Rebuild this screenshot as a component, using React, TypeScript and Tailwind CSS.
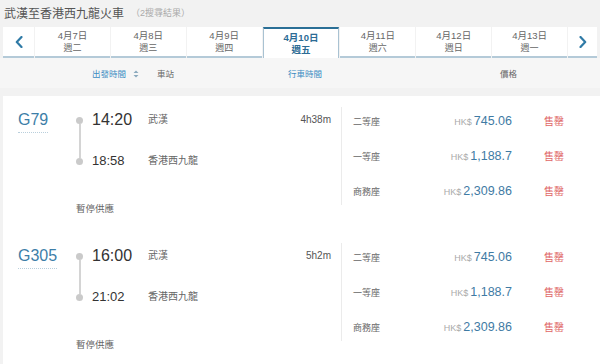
import React from "react";

const font = "font-['Liberation_Sans','Noto_Sans_CJK_TC',sans-serif]";

const dates = [
  { d: "4月7日", w: "週二" },
  { d: "4月8日", w: "週三" },
  { d: "4月9日", w: "週四" },
  { d: "4月10日", w: "週五", active: true },
  { d: "4月11日", w: "週六" },
  { d: "4月12日", w: "週日" },
  { d: "4月13日", w: "週一" },
];

const seats = [
  { name: "二等座", price: "745.06" },
  { name: "一等座", price: "1,188.7" },
  { name: "商務座", price: "2,309.86" },
];

function Chevron({ dir }: { dir: "l" | "r" }) {
  return (
    <svg width="8" height="12" viewBox="0 0 8 12" fill="none">
      <path
        d={dir === "l" ? "M6.5 1 L1.8 6 L6.5 11" : "M1.5 1 L6.2 6 L1.5 11"}
        stroke="#2f7aa6"
        strokeWidth="2.2"
        strokeLinecap="round"
        strokeLinejoin="round"
      />
    </svg>
  );
}

function Train({ code, dep, arr, dur }: { code: string; dep: string; arr: string; dur: string }) {
  return (
    <div className="h-[136px] flex items-start pl-[15px] pt-[12px]">
      <div className="flex flex-col">
        <div className="flex items-start">
          <div className="w-[58px]">
            <span className="inline-block text-[16px] leading-[24px] text-[#3d7ea8] border-b border-dotted border-[#b9cfdc]">
              {code}
            </span>
          </div>
          <div className="w-[7px] flex flex-col items-center pt-[9px]">
            <div className="w-[7px] h-[7px] rounded-full bg-[#cacaca]" />
            <div className="w-[2px] h-[34px] bg-[#d4d4d4]" />
            <div className="w-[7px] h-[7px] rounded-full bg-[#cacaca]" />
          </div>
          <div className="w-[56px] ml-[9px] flex flex-col">
            <div className="text-[16px] leading-[24px] text-[#333]">{dep}</div>
            <div className="text-[13px] leading-[20px] mt-[19px] text-[#333]">{arr}</div>
          </div>
          <div className="w-[130px] flex flex-col">
            <div className="text-[10px] leading-[24px] text-[#666]">武漢</div>
            <div className="text-[10px] leading-[20px] mt-[19px] text-[#666]">香港西九龍</div>
          </div>
          <div className="w-[53px] text-right text-[10px] leading-[24px] text-[#555]">{dur}</div>
        </div>
        <div className="ml-[58px] mt-[30px] text-[9.5px] leading-[16px] text-[#666]">暫停供應</div>
      </div>
      <div className="ml-[10px] -mt-[1px] pt-[1px] pb-[3px] border-l border-[#ebebeb] pl-[11px] flex flex-col gap-[11px]">
        {seats.map((s) => (
          <div key={s.name} className="flex items-baseline h-[24px] leading-[24px]">
            <div className="w-[60px] text-[9px] text-[#666]">{s.name}</div>
            <div className="w-[99px] text-right">
              <span className="text-[9px] text-[#aaa]">HK$</span>
              <span className="text-[12.5px] text-[#3f7ba4] ml-[2px]">{s.price}</span>
            </div>
            <div className="ml-[32px] text-[10px] text-[#e06666]">售罄</div>
          </div>
        ))}
      </div>
    </div>
  );
}

export default function App() {
  return (
    <div className={`${font} w-[600px] h-[364px] overflow-hidden bg-[#f2f2f2]`}>
      <div className="h-[27px] flex items-center pl-[4px]">
        <span className="text-[12px] text-[#555]">武漢至香港西九龍火車</span>
        <span className="ml-[7px] text-[9px] text-[#aaa]">（2搜尋結果）</span>
      </div>
      <div className="flex gap-[1px] px-[3px] h-[31px]">
        <div className="w-[31px] bg-white border-b-2 border-[#b4cad8] flex items-center justify-center">
          <Chevron dir="l" />
        </div>
        {dates.map((t) =>
          t.active ? (
            <div
              key={t.d}
              className="flex-1 bg-white border-t-2 border-x border-[#2a6f96] border-x-[#a9c2d2] flex flex-col items-center justify-center leading-[12px] text-[#2c6c95] font-bold"
            >
              <span className="text-[9.5px]">{t.d}</span>
              <span className="text-[9.5px]">{t.w}</span>
            </div>
          ) : (
            <div
              key={t.d}
              className="flex-1 bg-white border-b-2 border-[#b4cad8] flex flex-col items-center justify-center leading-[12px] pt-[1px] text-[#666]"
            >
              <span className="text-[9.5px]">{t.d}</span>
              <span className="text-[9px]">{t.w}</span>
            </div>
          )
        )}
        <div className="w-[29px] bg-white border-b-2 border-[#b4cad8] flex items-center justify-center">
          <Chevron dir="r" />
        </div>
      </div>
      <div className="h-[30px] bg-[#f6f6f6] flex items-center pl-[92px] pt-[2px] text-[8.5px]">
        <span className="w-[65px] flex items-center text-[#3a8cc2]">
          出發時間
          <svg width="6" height="8" viewBox="0 0 6 8" className="ml-[7px]">
            <path d="M3 0.5 L5.5 3 L0.5 3 Z" fill="#8aa9bd" />
            <path d="M3 7.5 L5.5 5 L0.5 5 Z" fill="#8aa9bd" />
          </svg>
        </span>
        <span className="w-[131px] text-[#666]">車站</span>
        <span className="w-[212px] text-[#3a8cc2]">行車時間</span>
        <span className="text-[#666]">價格</span>
      </div>
      <div className="h-[8px]" />
      <div className="ml-[3px] bg-white">
        <Train code="G79" dep="14:20" arr="18:58" dur="4h38m" />
        <Train code="G305" dep="16:00" arr="21:02" dur="5h2m" />
      </div>
    </div>
  );
}
